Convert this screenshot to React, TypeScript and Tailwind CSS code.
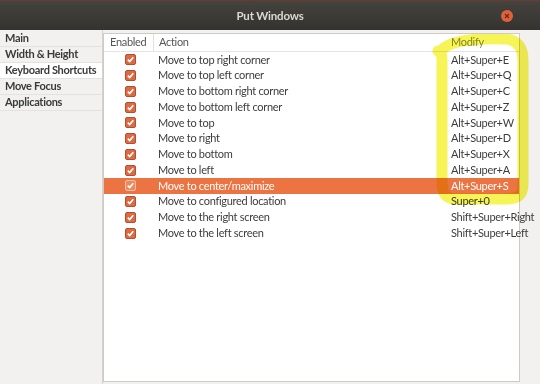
const ROWS: [string, string][] = [
  ["Move to top right corner", "Alt+Super+E"],
  ["Move to top left corner", "Alt+Super+Q"],
  ["Move to bottom right corner", "Alt+Super+C"],
  ["Move to bottom left corner", "Alt+Super+Z"],
  ["Move to top", "Alt+Super+W"],
  ["Move to right", "Alt+Super+D"],
  ["Move to bottom", "Alt+Super+X"],
  ["Move to left", "Alt+Super+A"],
  ["Move to center/maximize", "Alt+Super+S"],
  ["Move to configured location", "Super+0"],
  ["Move to the right screen", "Shift+Super+Right"],
  ["Move to the left screen", "Shift+Super+Left"],
];

const TABS = ["Main", "Width & Height", "Keyboard Shortcuts", "Move Focus", "Applications"];

function Check({ active }: { active: boolean }) {
  return (
    <span
      className={
        "flex h-[11px] w-[11px] items-center justify-center rounded-[2px] border " +
        (active ? "border-[#f6c0a8] bg-[#ec8a5e]" : "border-[#b5502f] bg-[#dc6a42]")
      }
    >
      <svg width="9" height="9" viewBox="0 0 9 9">
        <path d="M1.8 4.6 L3.7 6.5 L7.3 2.2" fill="none" stroke="white" strokeWidth="1.6" />
      </svg>
    </span>
  );
}

export default function App() {
  return (
    <div
      className="flex h-[384px] w-[540px] flex-col overflow-hidden text-[11px] tracking-[-0.3px] text-[#3c3c3c]"
      style={{ fontFamily: 'Lato, "Noto Sans", sans-serif' }}
    >
      <div className="relative flex h-[30px] items-center justify-center border-t border-[#6b3a36] bg-gradient-to-b from-[#45433e] to-[#34332f]">
        <span className="text-[11.5px] font-bold tracking-[-0.2px] text-[#dcd9d2]">Put Windows</span>
        <span className="absolute right-[27px] top-[9px] flex h-[12px] w-[12px] items-center justify-center rounded-full bg-[#e0603c]">
          <svg width="6" height="6" viewBox="0 0 6 6">
            <path d="M1 1 L5 5 M5 1 L1 5" stroke="#6b2a1a" strokeWidth="1.2" />
          </svg>
        </span>
      </div>

      <div className="flex flex-1 bg-[#f2f1f0]">
        <div className="w-[103px] border-r border-[#d6d2ce] pt-[1px]">
          {TABS.map((t) => (
            <div
              key={t}
              className={
                "flex h-[16px] items-center whitespace-nowrap border-b border-[#e4e1de] pl-[5px] font-bold text-[#3a3a3a] " +
                (t === "Keyboard Shortcuts" ? "bg-white" : "")
              }
            >
              {t}
            </div>
          ))}
        </div>

        <div className="flex-1 pb-[2px] pr-[20px] pt-[3px]">
          <div className="relative h-full border border-[#cfcac5] bg-white">
            <div className="flex h-[18px] items-center border-b border-[#e6e3e0] text-[#555]">
              <span className="w-[50px] border-r border-[#e2dfdc] pl-[6px]">Enabled</span>
              <span className="flex-1 pl-[5px]">Action</span>
              <span className="w-[68px] text-[#8a8a55]">Modify</span>
            </div>
            {ROWS.map(([action, key], i) => {
              const sel = i === 8;
              return (
                <div
                  key={action}
                  className={
                    "flex h-[15.75px] items-center " + (sel ? "bg-[#ec7442] text-white" : "")
                  }
                >
                  <span className="flex w-[50px] justify-center pl-[2px]">
                    <Check active={sel} />
                  </span>
                  <span className="flex-1 pl-[4px]">{action}</span>
                  <span className="w-[68px] whitespace-nowrap">{key}</span>
                </div>
              );
            })}

            <svg
              className="pointer-events-none absolute left-0 top-0 mix-blend-multiply"
              width="430"
              height="200"
              viewBox="0 0 430 200"
            >
              <path
                d="M336 18 C344 6 372 4 402 5 C414 6 419 14 419 26 L419 150 C419 162 413 165 401 165 L352 165 C341 165 338 158 338 148 L338 28 C338 22 338 19 334 17"
                fill="none"
                stroke="#f4f23a"
                strokeWidth="11"
                strokeLinecap="round"
                opacity="0.85"
              />
            </svg>
          </div>
        </div>
      </div>
    </div>
  );
}
